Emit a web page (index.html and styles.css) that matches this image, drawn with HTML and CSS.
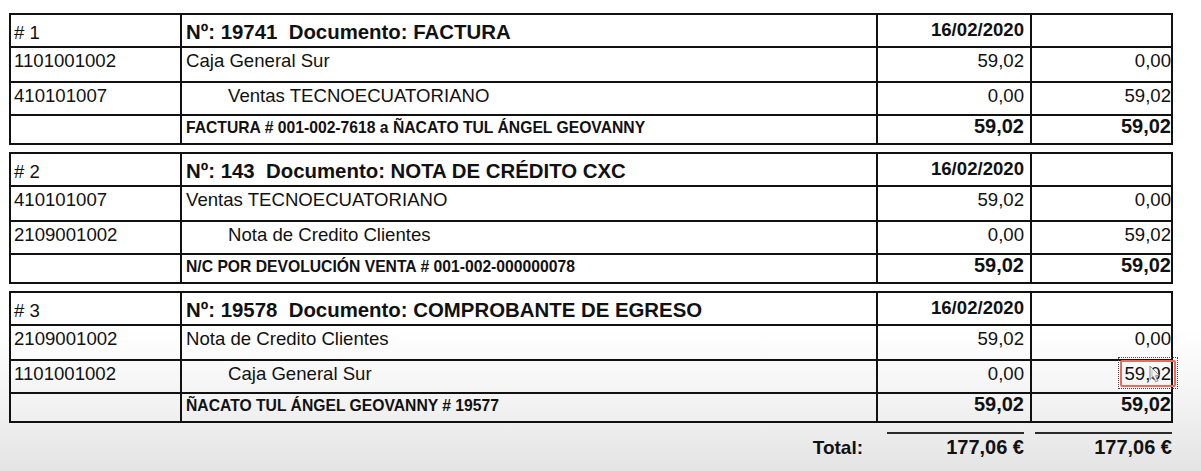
FILE: index.html
```html
<!DOCTYPE html>
<html lang="es">
<head>
<meta charset="utf-8">
<title>Diario</title>
<link rel="stylesheet" href="styles.css">
</head>
<body>
<div class="page">
  <div class="entries">
    <section class="entry">
      <div class="acct r1">#&nbsp;1</div>
      <div class="desc title">Nº: 19741&nbsp; Documento: FACTURA</div>
      <div class="amt date">16/02/2020</div>
      <div class="amt last"></div>

      <div class="acct">1101001002</div>
      <div class="desc">Caja General Sur</div>
      <div class="amt">59,02</div>
      <div class="amt last">0,00</div>

      <div class="acct">410101007</div>
      <div class="desc indent">Ventas TECNOECUATORIANO</div>
      <div class="amt">0,00</div>
      <div class="amt last">59,02</div>

      <div class="acct"></div>
      <div class="desc memo">FACTURA # 001-002-7618 a ÑACATO TUL ÁNGEL GEOVANNY</div>
      <div class="amt sum">59,02</div>
      <div class="amt last sum">59,02</div>
    </section>

    <section class="entry">
      <div class="acct r1">#&nbsp;2</div>
      <div class="desc title">Nº: 143&nbsp; Documento: NOTA DE CRÉDITO CXC</div>
      <div class="amt date">16/02/2020</div>
      <div class="amt last"></div>

      <div class="acct">410101007</div>
      <div class="desc">Ventas TECNOECUATORIANO</div>
      <div class="amt">59,02</div>
      <div class="amt last">0,00</div>

      <div class="acct">2109001002</div>
      <div class="desc indent">Nota de Credito Clientes</div>
      <div class="amt">0,00</div>
      <div class="amt last">59,02</div>

      <div class="acct"></div>
      <div class="desc memo">N/C POR DEVOLUCIÓN VENTA # 001-002-000000078</div>
      <div class="amt sum">59,02</div>
      <div class="amt last sum">59,02</div>
    </section>

    <section class="entry">
      <div class="acct r1">#&nbsp;3</div>
      <div class="desc title">Nº: 19578&nbsp; Documento: COMPROBANTE DE EGRESO</div>
      <div class="amt date">16/02/2020</div>
      <div class="amt last"></div>

      <div class="acct">2109001002</div>
      <div class="desc">Nota de Credito Clientes</div>
      <div class="amt">59,02</div>
      <div class="amt last">0,00</div>

      <div class="acct">1101001002</div>
      <div class="desc indent">Caja General Sur</div>
      <div class="amt">0,00</div>
      <div class="amt last selhost">59,02
        <div class="selection"><div class="selring"></div></div>
        <svg class="cursor" width="12" height="18" viewBox="0 0 12 18"><path d="M1 1 L1 14.5 L4.2 11.6 L6.6 16.8 L8.9 15.8 L6.5 10.7 L10.6 10.7 Z" fill="#f4f4f4" stroke="#777" stroke-width="1" stroke-linejoin="round"/></svg>
      </div>

      <div class="acct"></div>
      <div class="desc memo">ÑACATO TUL ÁNGEL GEOVANNY # 19577</div>
      <div class="amt sum">59,02</div>
      <div class="amt last sum">59,02</div>
    </section>
  </div>

  <div class="totals">
    <div class="label">Total:</div>
    <div class="total debit">177,06 €</div>
    <div class="total credit">177,06 €</div>
  </div>
</div>
</body>
</html>
```

FILE: styles.css
```css
* {
  box-sizing: border-box;
}

html, body {
  margin: 0;
  padding: 0;
}

body {
  min-height: 471px;
  background: linear-gradient(180deg, #ffffff 0px, #ffffff 330px, #f3f3f3 400px, #e4e4e4 471px);
  font-family: "Liberation Sans", Arial, sans-serif;
  color: #111;
}

.page {
  width: 1173px;
  padding: 13px 0 0 9px;
}

.entries {
  display: flex;
  flex-direction: column;
  gap: 7px;
}

.entry {
  display: grid;
  grid-template-columns: 171px 696px 154px 141px;
  grid-template-rows: 33px 35px 33px 29px;
  border-top: 2px solid #111;
  border-left: 2px solid #111;
}

.entry > div {
  border-right: 2px solid #111;
  border-bottom: 2px solid #111;
  font-size: 18.6px;
  line-height: 23px;
  padding-top: 1px;
  white-space: nowrap;
}

.acct {
  padding-left: 3px;
}

.desc {
  padding-left: 4px;
}

.entry > .indent {
  padding-left: 46px;
}

.amt {
  text-align: right;
  padding-right: 6px;
}

.entry > .last {
  padding-right: 0;
}

.entry > .r1 {
  padding-top: 6px;
}

.entry > .title {
  font-size: 20.4px;
  font-weight: bold;
  padding-top: 6px;
}

.entry > .date {
  font-weight: bold;
  padding-top: 3px;
}

.entry > .memo {
  font-size: 15.7px;
  font-weight: bold;
  padding-top: 0;
}

.entry > .sum {
  font-size: 20px;
  font-weight: bold;
  line-height: 20px;
  padding-top: 0;
}

.selhost {
  position: relative;
}

.selection {
  position: absolute;
  left: 86px;
  top: -4px;
  width: 60px;
  height: 32px;
  border: 1px dotted #444;
}

.selring {
  position: absolute;
  left: 1px;
  top: 2px;
  right: 1px;
  bottom: 1px;
  border: 2px solid #ef6a5a;
  border-radius: 2px;
}

.cursor {
  position: absolute;
  left: 117px;
  top: 4px;
  opacity: 0.85;
}

.totals {
  display: grid;
  grid-template-columns: 171px 696px 154px 141px;
  margin-top: 9px;
  padding-left: 2px;
  font-weight: bold;
  font-size: 20px;
  line-height: 23px;
}

.totals .label {
  grid-column: 2;
  text-align: right;
  padding-right: 15px;
  padding-top: 4px;
  font-size: 19px;
}

.total {
  border-top: 2px solid #2a2a2a;
  text-align: right;
  padding-top: 2px;
}

.debit {
  margin: 0 8px 0 9px;
}

.credit {
  margin: 0 1px 0 3px;
}
```
